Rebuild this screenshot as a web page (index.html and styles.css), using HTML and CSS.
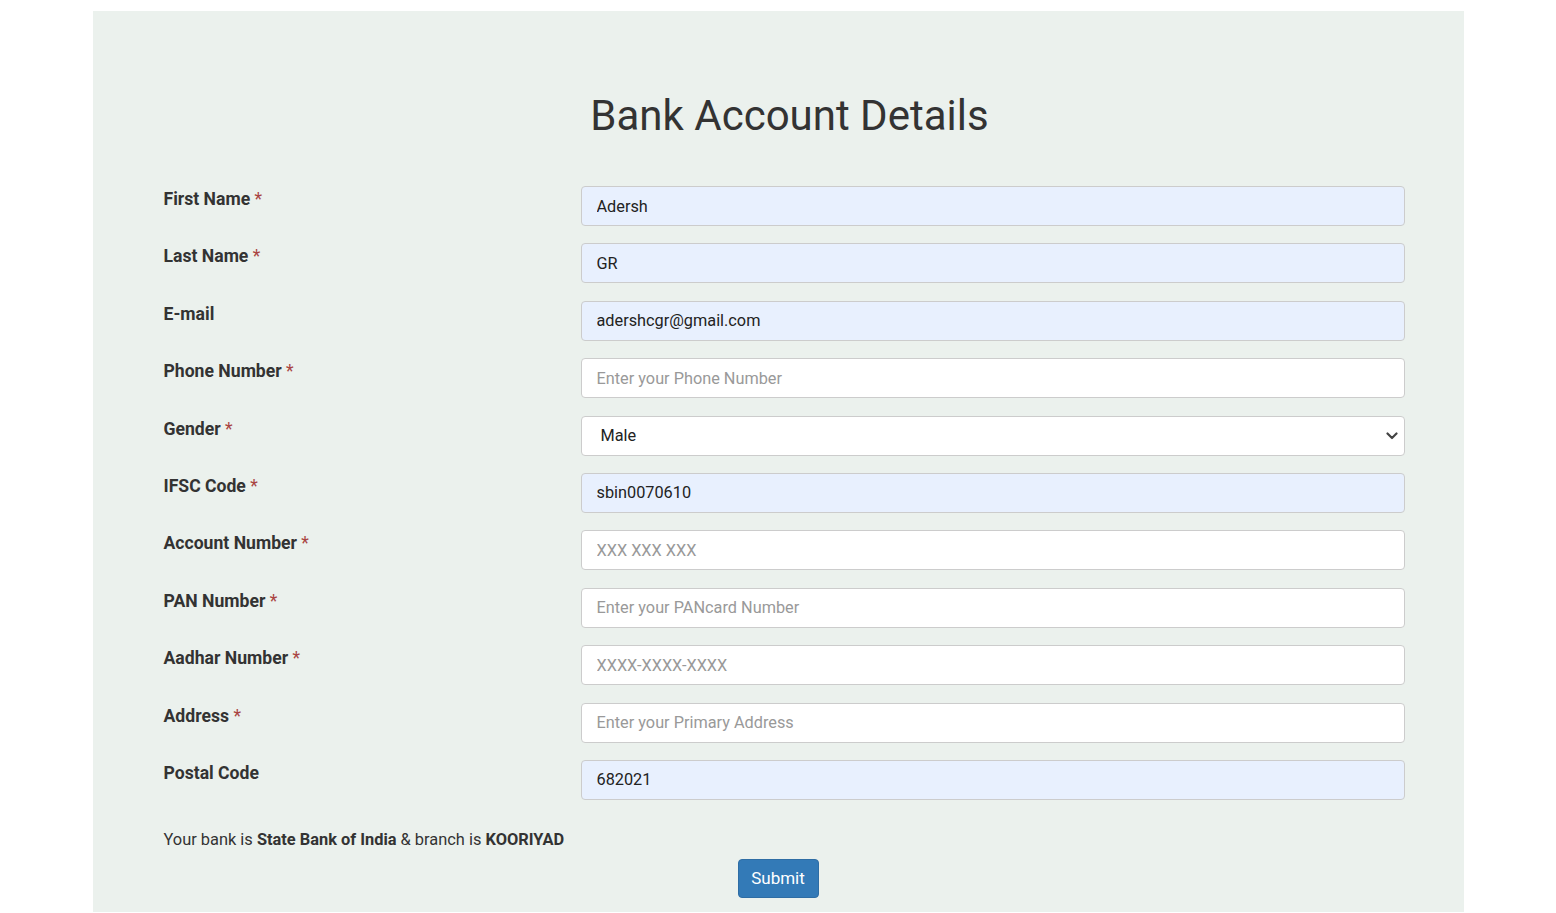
FILE: index.html
```html
<!DOCTYPE html>
<html>
<head>
<meta charset="utf-8">
<link rel="stylesheet" href="styles.css">
</head>
<body>
<div class="page">
  <h1 class="title">Bank Account Details</h1>
  <form class="form">
    <div class="row"><label class="label">First Name <span class="req">*</span></label><input class="field filled" value="Adersh"></div>
    <div class="row"><label class="label">Last Name <span class="req">*</span></label><input class="field filled" value="GR"></div>
    <div class="row"><label class="label">E-mail</label><input class="field filled" value="adershcgr@gmail.com"></div>
    <div class="row"><label class="label">Phone Number <span class="req">*</span></label><input class="field" placeholder="Enter your Phone Number"></div>
    <div class="row"><label class="label">Gender <span class="req">*</span></label>
      <div class="select-wrap">
        <select class="field select"><option>Male</option><option>Female</option></select>
        <svg class="chevron" width="12" height="8" viewBox="0 0 12 8"><path d="M1.5 1.5 L6 6 L10.5 1.5" fill="none" stroke="#444" stroke-width="2.2" stroke-linecap="round" stroke-linejoin="round"/></svg>
      </div>
    </div>
    <div class="row"><label class="label">IFSC Code <span class="req">*</span></label><input class="field filled" value="sbin0070610"></div>
    <div class="row"><label class="label">Account Number <span class="req">*</span></label><input class="field" placeholder="XXX XXX XXX"></div>
    <div class="row"><label class="label">PAN Number <span class="req">*</span></label><input class="field" placeholder="Enter your PANcard Number"></div>
    <div class="row"><label class="label">Aadhar Number <span class="req">*</span></label><input class="field" placeholder="XXXX-XXXX-XXXX"></div>
    <div class="row"><label class="label">Address <span class="req">*</span></label><input class="field" placeholder="Enter your Primary Address"></div>
    <div class="row"><label class="label">Postal Code</label><input class="field filled" value="682021"></div>
    <p class="info">Your bank is <b>State Bank of India</b> &amp; branch is <b>KOORIYAD</b></p>
    <div class="actions"><button type="button" class="submit">Submit</button></div>
  </form>
</div>
</body>
</html>
```
FILE: styles.css
```css
html, body {
  margin: 0;
  padding: 0;
  background: #ffffff;
  font-family: Roboto, "Liberation Sans", sans-serif;
  color: #333333;
}
.page {
  width: 1371px;
  margin: 11px auto 0;
  background: #ebf1ed;
  padding: 80px 0 14px;
  box-sizing: border-box;
}
.title {
  margin: 0;
  font-size: 42px;
  font-weight: 400;
  line-height: 50px;
  text-align: center;
  padding-left: 23px;
  color: #333333;
}
.form {
  margin-top: 45px;
  padding: 0 59px 0 71px;
}
.row {
  display: grid;
  grid-template-columns: 417px 1fr;
  align-items: start;
  margin-bottom: 17.4px;
}
.label {
  font-size: 17.6px;
  font-weight: 700;
  line-height: 22px;
  padding-top: 2px;
  color: #333333;
}
.req {
  color: #a94442;
  font-weight: 400;
}
.field {
  height: 40px;
  box-sizing: border-box;
  border: 1px solid #cccccc;
  border-radius: 4px;
  background: #ffffff;
  padding: 0 15px;
  font-family: Roboto, "Liberation Sans", sans-serif;
  font-size: 16.3px;
  color: #222222;
  width: 100%;
  margin: 0;
  outline: none;
}
.field::placeholder {
  color: #999999;
}
.filled {
  background: #e8f0fe;
}
.select-wrap {
  position: relative;
}
.select {
  appearance: none;
  -webkit-appearance: none;
  padding-left: 19px;
  display: block;
}
.chevron {
  position: absolute;
  right: 7px;
  top: 16px;
  pointer-events: none;
}
.info {
  margin: 28.6px 0 0;
  font-size: 16.4px;
  line-height: 22px;
  color: #333333;
}
.info b {
  font-weight: 700;
}
.actions {
  display: flex;
  justify-content: center;
  margin-top: 8px;
  margin-left: -12px;
}
.submit {
  height: 39px;
  width: 81px;
  background: #337ab7;
  border: 1px solid #2e6da4;
  border-radius: 4px;
  color: #ffffff;
  font-family: Roboto, "Liberation Sans", sans-serif;
  font-size: 17px;
  padding: 0;
}
```
